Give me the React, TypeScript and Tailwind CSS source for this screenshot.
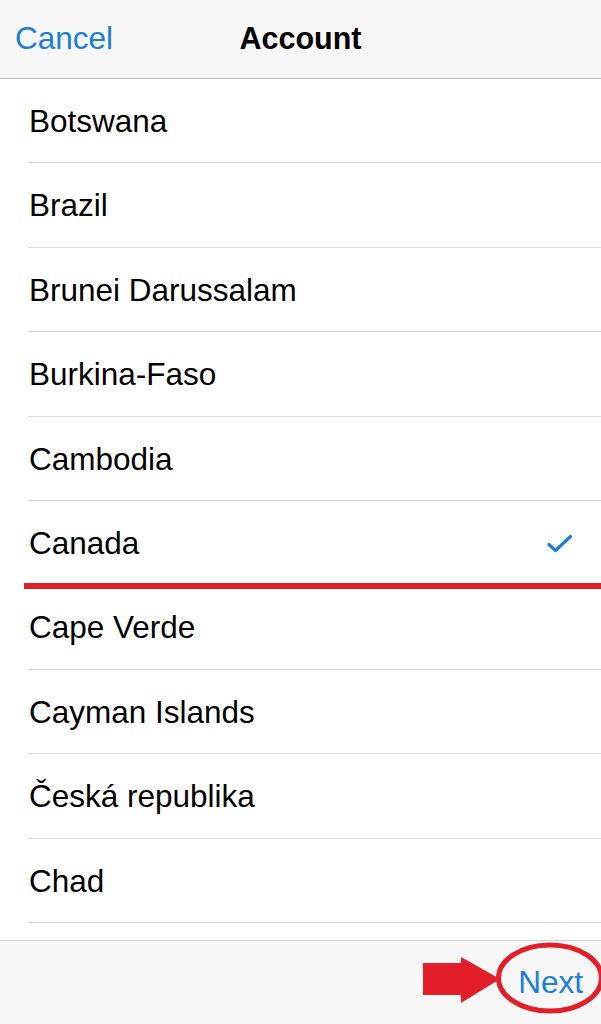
const countries = [
  "Botswana",
  "Brazil",
  "Brunei Darussalam",
  "Burkina-Faso",
  "Cambodia",
  "Canada",
  "Cape Verde",
  "Cayman Islands",
  "Česká republika",
  "Chad",
];

const selected = "Canada";

const CheckIcon = () => (
  <svg width="26" height="20" viewBox="0 0 26 20" fill="none">
    <path d="M2 10.5 L8.5 16.5 L23.5 2.5" stroke="#1b7fd8" strokeWidth="3.2" strokeLinecap="round" strokeLinejoin="round" />
  </svg>
);

const CountryRow = ({ name }: { name: string }) => {
  const isSelected = name === selected;
  return (
    <div className="relative h-[84.4px] pl-[28px]">
      <div className="flex h-full items-center justify-between border-b border-[#dcdcdc] pt-[2px] pr-[28px]">
        <span className="pl-[1px] text-[31.5px] text-black">{name}</span>
        {isSelected && <CheckIcon />}
      </div>
      {isSelected && (
        <div className="absolute bottom-[-4px] left-[24px] right-0 h-[6px] bg-[#e21f28]" />
      )}
    </div>
  );
};

export default function App() {
  return (
    <div className="flex h-[1024px] w-[601px] flex-col overflow-hidden bg-white font-['Liberation_Sans',Arial,sans-serif]">
      <header className="relative flex h-[79px] shrink-0 items-center border-b border-[#b9b9b9] bg-[#f7f7f7] px-[15px]">
        <span className="text-[31.5px] text-[#1b7fd8]">Cancel</span>
        <span className="absolute left-0 right-0 text-center text-[30.5px] font-bold text-black">Account</span>
      </header>

      <main className="flex flex-col">
        {countries.map((c) => (
          <CountryRow key={c} name={c} />
        ))}
      </main>

      <div className="flex-1" />

      <footer className="relative flex h-[84px] shrink-0 items-center justify-end border-t border-[#d0d0d0] bg-[#f7f7f7] pr-[18px]">
        <div className="relative flex items-center">
          <span className="text-[31.5px] text-[#1b7fd8]">Next</span>
        </div>
        {/* annotation arrow */}
        <svg className="absolute left-[423px] top-[16px]" width="78" height="50" viewBox="0 0 78 50">
          <rect x="0" y="6" width="40" height="32" fill="#e21f28" />
          <polygon points="38,0 77,22 38,46" fill="#e21f28" />
        </svg>
        {/* annotation ellipse */}
        <svg className="absolute left-[495px] top-[1px]" width="110" height="72" viewBox="0 0 110 72">
          <ellipse cx="55" cy="36" rx="51.5" ry="33" fill="none" stroke="#e21f28" strokeWidth="5" />
        </svg>
      </footer>
    </div>
  );
}
